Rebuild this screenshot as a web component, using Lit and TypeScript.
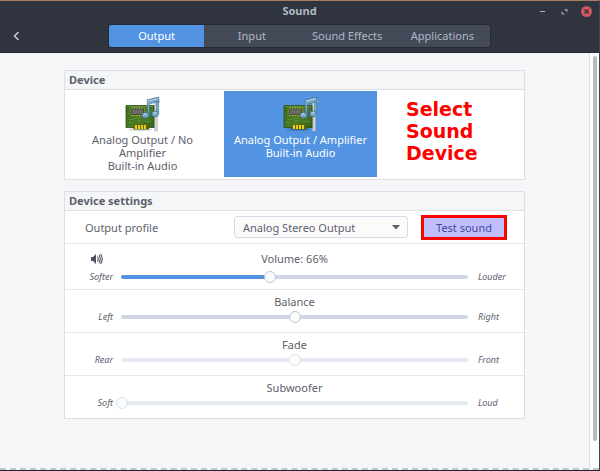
import { LitElement, html, css, svg } from "lit";
import { customElement, property } from "lit/decorators.js";
import { classMap } from "lit/directives/class-map.js";

const soundCard = html`
  <svg class="card" viewBox="0 0 36 36" width="36" height="36" aria-hidden="true">
    <defs>
      <linearGradient id="note" x1="0" y1="0" x2="0" y2="1">
        <stop offset="0" stop-color="#6c9fc0" />
        <stop offset="0.5" stop-color="#86b3cf" />
        <stop offset="1" stop-color="#5b92b6" />
      </linearGradient>
      <linearGradient id="board" x1="0" y1="0" x2="1" y2="1">
        <stop offset="0" stop-color="#3f6c1c" />
        <stop offset="0.6" stop-color="#4c7b22" />
        <stop offset="1" stop-color="#345c16" />
      </linearGradient>
    </defs>
    <ellipse cx="15" cy="33.500" rx="12" ry="1.500" fill="#000" opacity="0.18" />
    <path d="M29.500 4.500h5v2H32.500v28.500h-3z" fill="#cfd1ce" stroke="#a8aaa7" stroke-width="0.400" />
    <path d="M1 9.500h28v22h-5.500v1.500H9V31.500H1z" fill="url(#board)" stroke="#2a4a12" stroke-width="0.800" />
    <path d="M2 10.400h26" stroke="#729f45" stroke-width="0.700" />
    <rect x="9.500" y="28.500" width="13" height="4.500" fill="#6a6410" />
    ${[10, 13, 16, 19].map((x) => svg`<rect x=${x} y="29" width="2" height="4" fill="#e8d010" />`)}
    <rect x="6.500" y="13" width="12" height="5.500" rx="0.500" fill="#6b6964" stroke="#45443f" stroke-width="0.800" />
    <path d="M6.500 11.800h13M6.500 19.600h13" stroke="#c9c860" stroke-width="1.200" stroke-dasharray="1.200 1.300" />
    <path d="M5.200 13v6M19.800 13v6" stroke="#b5b550" stroke-width="0.900" stroke-dasharray="1 1.200" />
    <path d="M4 23.500h4l2-1h6M20 25.500h6M4 26.500h3M12 24.500h4" stroke="#6c9a3c" stroke-width="0.700" fill="none" />
    <path d="M25.500 12.500h1.500v1.500h-1.500zM25.500 16.500h1.500v1.500h-1.500zM25.500 20.500h1.500v1.500h-1.500z" fill="#2f55a4" />
    <path d="M22.300 3.800 33.700 1v4.500L24.300 8v11h-2z" fill="url(#note)" stroke="#3b6c8e" stroke-width="0.600" />
    <path d="M31.500 5.800h2.200v12h-2.200z" fill="url(#note)" stroke="#3b6c8e" stroke-width="0.500" />
    <ellipse cx="20.500" cy="19.300" rx="3.300" ry="2.900" fill="url(#note)" stroke="#3b6c8e" stroke-width="0.600" />
    <ellipse cx="30.200" cy="18" rx="3.300" ry="2.900" fill="url(#note)" stroke="#3b6c8e" stroke-width="0.600" />
    <path d="M18.500 18.300q1.500-1.200 3-.5M28.300 17q1.500-1.200 3-.5M23.200 5l9.500-2.400" stroke="#c9e0ed" stroke-width="0.900" fill="none" />
  </svg>
`;

/** One labelled slider row of the device settings list. */
@customElement("level-row")
class LevelRow extends LitElement {
  @property() heading = "";
  @property() low = "";
  @property() high = "";
  @property({ type: Number }) value = 0;
  @property({ type: Boolean }) filled = false;
  @property({ type: Boolean }) speaker = false;
  @property({ type: Boolean }) disabled = false;

  static styles = css`
    :host {
      display: block;
      border-top: 1px solid #e6e7ea;
      padding: 4px 12px 8px 12px;
    }
    :host([speaker]) {
      padding-top: 7px;
      padding-bottom: 5px;
    }
    .title {
      display: grid;
      grid-template-columns: 40px 1fr 40px;
      align-items: center;
      justify-items: center;
      height: 15px;
      line-height: 15px;
    }
    .title label {
      grid-column: 2;
      grid-row: 1;
    }
    .title svg {
      grid-column: 1;
      grid-row: 1;
    }
    .line {
      display: grid;
      grid-template-columns: 36px 1fr 36px;
      column-gap: 3px;
      align-items: center;
      height: 15px;
      font-size: 9px;
      font-style: italic;
    }
    :host([speaker]) .line {
      margin-top: 3px;
    }
    .low {
      text-align: right;
    }
    .slot {
      display: grid;
      align-items: center;
    }
    .slot > * {
      grid-area: 1 / 1;
    }
    .track {
      height: 4px;
      margin: 0 5px;
      border-radius: 2px;
      background: #cfd6e6;
      overflow: hidden;
    }
    .fill {
      height: 4px;
      background: #5294e2;
    }
    :host([disabled]) .track {
      background: #e5e9f2;
    }
    input {
      appearance: none;
      width: 100%;
      height: 12px;
      margin: 0;
      background: transparent;
    }
    input::-webkit-slider-thumb {
      appearance: none;
      box-sizing: border-box;
      width: 12px;
      height: 12px;
      border: 1px solid #b9c3dc;
      border-radius: 50%;
      background: #fcfcfc;
    }
    :host([disabled]) input::-webkit-slider-thumb {
      border-color: #dbdfeb;
    }
    .high {
      padding-left: 2px;
    }
  `;

  render() {
    return html`
      <div class="title">
        ${this.speaker
          ? html`<svg width="14" height="12" viewBox="0 0 14 12" fill="none" stroke="#4b505c" aria-hidden="true">
              <path d="M1 4h2l3-3v10l-3-3H1z" fill="#4b505c" stroke="none" />
              <path d="M7.500 3.500q1.500 2.500 0 5M9 2q2.500 4 0 8M10.500 1q3.500 5 0 10" stroke-width="1.100" />
            </svg>`
          : null}
        <label for="level">${this.heading}</label>
      </div>
      <div class="line">
        <span class="low">${this.low}</span>
        <div class="slot">
          <div class="track">
            ${this.filled ? html`<div class="fill" style="width: ${this.value}%"></div>` : null}
          </div>
          <input id="level" type="range" min="0" max="100" .value=${String(this.value)} ?disabled=${this.disabled} />
        </div>
        <span class="high">${this.high}</span>
      </div>
    `;
  }
}

@customElement("app-root")
class AppRoot extends LitElement {
  static styles = css`
    :host {
      display: flex;
      flex-direction: column;
      box-sizing: border-box;
      min-height: 100vh;
      border-top: 1px solid #a97a68;
      border-right: 1px solid #3b4254;
      border-bottom: 1px solid #1c2230;
      background: #f5f6f8;
      color: #5c616c;
      font: 11px "Noto Sans", "Open Sans", sans-serif;
    }
    button,
    select {
      font: inherit;
      margin: 0;
    }
    header {
      background: #2f343f;
      border-bottom: 1px solid #262a33;
      color: #afb8c6;
      height: 51px;
    }
    .titlebar,
    .nav {
      display: grid;
      grid-template-columns: 108px 1fr 108px;
      align-items: center;
    }
    .titlebar {
      height: 20px;
      margin-bottom: 3px;
    }
    h1 {
      grid-column: 2;
      margin: 0;
      font-size: 11px;
      line-height: 20px;
      text-align: center;
    }
    .controls {
      display: flex;
      justify-content: flex-end;
      align-items: center;
      gap: 11px;
      padding-right: 7px;
    }
    .plain {
      display: flex;
      padding: 0;
      border: 0;
      background: none;
      color: inherit;
    }
    .back {
      padding-left: 12px;
    }
    .tabs {
      display: grid;
      grid-template-columns: repeat(4, 1fr);
      border: 1px solid #262a33;
      border-radius: 3px;
      overflow: hidden;
    }
    .tab {
      height: 22px;
      padding: 0 0 2px;
      border: 0;
      background: #444a58;
      color: #afb8c6;
    }
    .tab.active {
      background: #5294e2;
      color: #fff;
    }
    .body {
      flex: 1;
      display: grid;
      grid-template-columns: 1fr 10px;
      border-bottom: 2px dashed #c3c6cb;
    }
    main {
      display: flex;
      flex-direction: column;
      gap: 11px;
      padding: 17px 64px;
    }
    .scroll {
      border-left: 1px solid #dfe1e5;
      background: #fcfcfd;
      padding: 3px 2px 27px 3px;
      display: flex;
    }
    .grip {
      flex: 1;
      border-radius: 3px;
      background: #b8b9be;
    }
    .panel {
      border: 1px solid #dcdfe4;
      background: #fff;
    }
    h2 {
      margin: 0;
      padding: 0 4px;
      background: #f5f6f8;
      font-size: 11px;
      line-height: 18px;
    }
    .devices {
      display: grid;
      grid-template-columns: 1fr 1fr 142px;
      column-gap: 5px;
      padding: 1px 0 2px 1px;
      border-top: 1px solid #dcdfe4;
    }
    .device {
      display: flex;
      flex-direction: column;
      align-items: center;
      height: 86px;
      padding: 5px 8px;
      border: 0;
      background: none;
      color: inherit;
      line-height: 13px;
    }
    .device.selected {
      background: #5294e2;
      color: #fff;
    }
    .card {
      margin-bottom: 1px;
    }
    .note {
      margin: 0;
      padding: 7px 0 0 24px;
      color: #f00;
      font: bold 19px/22px "DejaVu Sans", sans-serif;
    }
    .profile {
      display: grid;
      grid-template-columns: 1fr 174px 86px;
      column-gap: 13px;
      align-items: center;
      height: 32px;
      padding: 0 17px 0 20px;
      border-top: 1px solid #dcdfe4;
    }
    .combo {
      display: grid;
      align-items: center;
    }
    .combo > * {
      grid-area: 1 / 1;
    }
    .combo svg {
      justify-self: end;
      margin-right: 8px;
      pointer-events: none;
    }
    select {
      appearance: none;
      height: 22px;
      padding: 0 20px 0 8px;
      border: 1px solid #d5dbe8;
      border-radius: 3px;
      background: #fbfbfc;
      color: inherit;
    }
    .test {
      height: 25px;
      padding: 0;
      border: 3px solid #f00;
      background: #bfbfff;
      color: #45489a;
    }
  `;

  render() {
    const tabs = ["Output", "Input", "Sound Effects", "Applications"];
    return html`
      <header>
        <div class="titlebar">
          <h1>Sound</h1>
          <div class="controls">
            <button class="plain" aria-label="Minimize">
              <svg width="12" height="11" viewBox="0 0 12 11"><path d="M4 5.500h5" stroke="#afb8c6" /></svg>
            </button>
            <button class="plain" aria-label="Restore">
              <svg width="11" height="11" viewBox="0 0 11 11" fill="#8f97a5">
                <path d="M5 3h3.500v3.500zM2.500 5v3.500H6z" />
              </svg>
            </button>
            <button class="plain" aria-label="Close">
              <svg width="11" height="11" viewBox="0 0 11 11">
                <circle cx="5.500" cy="5.500" r="5.500" fill="#cc575d" />
                <path d="m3.500 3.500 4 4m0-4-4 4" stroke="#2f343f" stroke-width="1.300" />
              </svg>
            </button>
          </div>
        </div>
        <nav class="nav">
          <button class="plain back" aria-label="Back">
            <svg width="8" height="12" viewBox="0 0 8 12">
              <path d="M6.500 2 2.500 6l4 4" fill="none" stroke="#c3cad5" stroke-width="1.600" />
            </svg>
          </button>
          <div class="tabs">
            ${tabs.map((t, i) => html`<button class=${classMap({ tab: true, active: i === 0 })}>${t}</button>`)}
          </div>
        </nav>
      </header>
      <div class="body">
        <main>
          <section class="panel">
            <h2>Device</h2>
            <div class="devices">
              <button class="device">${soundCard}<span>Analog Output / No<br />Amplifier<br />Built-in Audio</span></button>
              <button class="device selected">${soundCard}<span>Analog Output / Amplifier<br />Built-in Audio</span></button>
              <p class="note">Select<br />Sound<br />Device</p>
            </div>
          </section>
          <section class="panel">
            <h2>Device settings</h2>
            <div class="profile">
              <label for="profile">Output profile</label>
              <div class="combo">
                <select id="profile"><option>Analog Stereo Output</option></select>
                <svg width="8" height="5" viewBox="0 0 8 5" aria-hidden="true"><path d="M0 0h8L4 4.500z" fill="#5c616c" /></svg>
              </div>
              <button class="test">Test sound</button>
            </div>
            <level-row heading="Volume: 66%" low="Softer" high="Louder" value="43" filled speaker></level-row>
            <level-row heading="Balance" low="Left" high="Right" value="50"></level-row>
            <level-row heading="Fade" low="Rear" high="Front" value="50" disabled></level-row>
            <level-row heading="Subwoofer" low="Soft" high="Loud" value="0" disabled></level-row>
          </section>
        </main>
        <div class="scroll"><div class="grip"></div></div>
      </div>
    `;
  }
}
